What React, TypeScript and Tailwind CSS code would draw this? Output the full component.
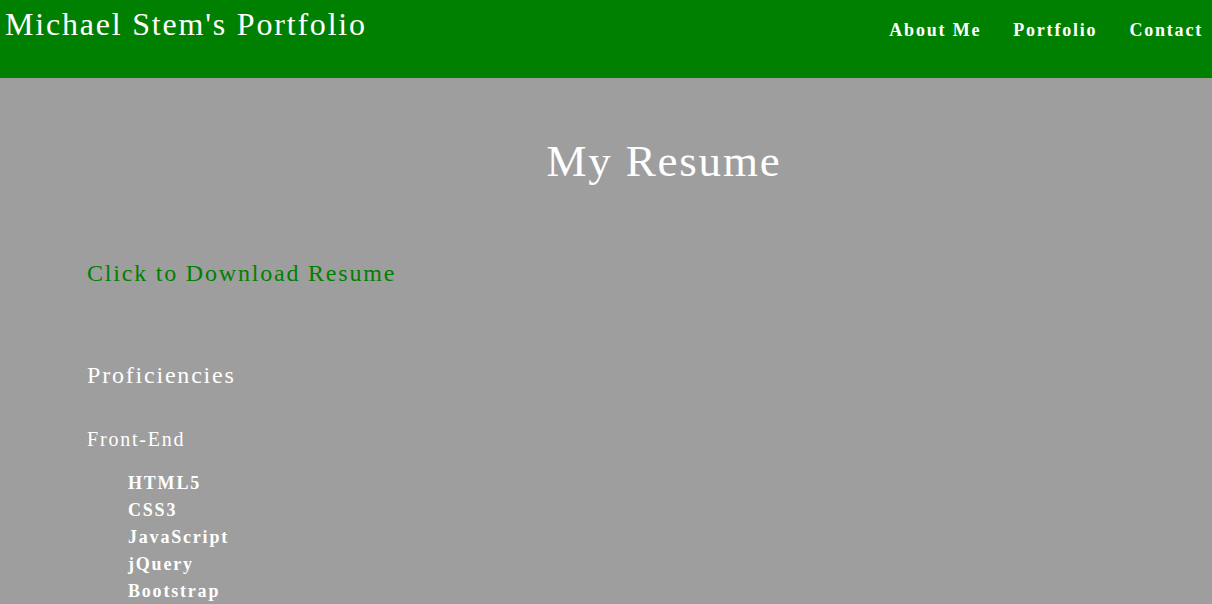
import React from "react";

export default function App() {
  const skills = ["HTML5", "CSS3", "JavaScript", "jQuery", "Bootstrap"];
  return (
    <div className="min-h-screen bg-[#9e9e9e] text-white tracking-[1.8px] font-['Liberation_Serif','Times_New_Roman',serif]">
      <header className="h-[78px] bg-[#008000] flex justify-between items-start">
        <h1 className="pl-[5px] pt-[6px] text-[32px] leading-[37px] font-normal">Michael Stem's Portfolio</h1>
        <nav className="flex gap-[32px] pt-[20px] pr-[9px] text-[18px] leading-[21px] font-bold">
          <a href="#">About Me</a>
          <a href="#">Portfolio</a>
          <a href="#">Contact</a>
        </nav>
      </header>
      <main className="pl-[87px] pb-[20px]">
        <h2 className="pt-[57px] pl-[29px] text-center text-[45px] leading-[52px] font-normal">My Resume</h2>
        <a href="#" className="block mt-[72px] text-[24px] leading-[28px] text-[#008000]">Click to Download Resume</a>
        <h3 className="mt-[74px] text-[24px] leading-[28px] font-normal">Proficiencies</h3>
        <h4 className="mt-[39px] text-[20px] leading-[23px] font-normal">Front-End</h4>
        <ul className="mt-[19px] pl-[41px] text-[18px] leading-[27px] font-bold">
          {skills.map((s) => (
            <li key={s}>{s}</li>
          ))}
        </ul>
      </main>
    </div>
  );
}
